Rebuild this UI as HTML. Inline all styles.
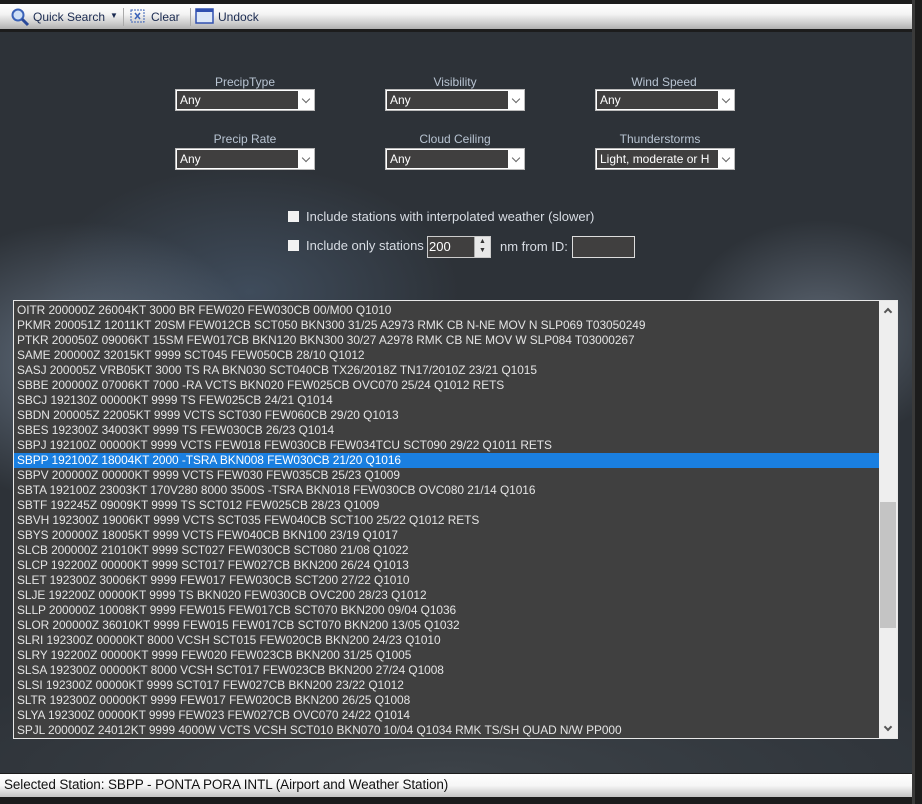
<!DOCTYPE html>
<html><head><meta charset="utf-8"><style>
*{margin:0;padding:0;box-sizing:border-box}
body{width:922px;height:804px;background:#1c1c1c;position:relative;overflow:hidden;font-family:"Liberation Sans",sans-serif}
#tb{position:absolute;left:0;top:4px;width:914px;height:25px;background:linear-gradient(#fff 0%,#f4f4f4 40%,#c9c9c9 80%,#b0b0b0 100%);border-right:1px solid #777}
#tb span{position:absolute;top:6px;font-size:12px;color:#1a2a50}
.sep{position:absolute;top:4px;width:1px;height:18px;background:#aaa}
#main{position:absolute;left:0;top:32px;width:912px;height:741px;overflow:hidden;
background:
radial-gradient(ellipse 260px 200px at 80px 330px,rgba(150,170,195,.5),rgba(0,0,0,0) 70%),
radial-gradient(ellipse 300px 180px at 250px 260px,rgba(90,115,145,.4),rgba(0,0,0,0) 70%),
radial-gradient(ellipse 200px 160px at 820px 300px,rgba(150,165,185,.45),rgba(0,0,0,0) 70%),
radial-gradient(ellipse 600px 120px at 450px 740px,rgba(60,66,72,1),rgba(45,50,56,1) 100%),
#0b1a30}
#rb{position:absolute;left:912px;top:0;width:3px;height:804px;background:#3a3a3a}
.lbl{position:absolute;width:140px;text-align:center;font-size:12px;color:#b8c4d2}
.cb{position:absolute;width:140px;height:22px;background:#fff;border:1px solid #bbb}
.cb .t{position:absolute;left:1px;top:1px;width:121px;height:18px;background:#403f3f;color:#fff;font-size:12px;padding:2px 0 0 3px;white-space:nowrap;overflow:hidden}
.cb .a{position:absolute;right:5px;top:6px;width:6px;height:6px;border-right:1px solid #666;border-bottom:1px solid #666;transform:rotate(45deg)}
.chk{position:absolute;width:11px;height:11px;background:#f2f2f2}
.ct{position:absolute;font-size:13px;color:#d8dde4}
#list{position:absolute;left:13px;top:300px;width:885px;height:439px;background:#404040;border:1px solid #e8e8e8}
#list div.r{height:15px;line-height:15px;font-size:11.9px;color:#e4e4e4;padding-left:3px;white-space:nowrap;width:865px;overflow:hidden;letter-spacing:-0.05px}
#list div.sel{background:#1a7fe0;color:#fff}
#sb{position:absolute;right:0;top:0;width:18px;height:437px;background:#eeeeee}
#thumb{position:absolute;left:1px;top:201px;width:16px;height:126px;background:#c4c4c4}
#status{position:absolute;left:0;top:774px;width:912px;height:23px;background:linear-gradient(#fff 0%,#f6f6f6 50%,#c4c4c4 100%);font-size:13.5px;color:#111;padding:3px 0 0 4px;letter-spacing:-0.1px}
</style></head><body>
<div id="tb">
<svg style="position:absolute;left:10px;top:3px" width="20" height="20"><circle cx="8" cy="8" r="5.5" fill="#cfe0f6" stroke="#3a62b8" stroke-width="2"/><line x1="12" y1="12" x2="18" y2="18" stroke="#2a4a9a" stroke-width="3"/></svg>
<span style="left:33px">Quick Search</span><span style="left:110px;top:7px;font-size:8px">▼</span>
<div class="sep" style="left:123px"></div>
<svg style="position:absolute;left:130px;top:5px" width="16" height="15"><rect x="1" y="1" width="13" height="12" fill="none" stroke="#3a62b8" stroke-dasharray="2,1"/><path d="M5 4l5 6M10 4l-5 6" stroke="#3a62b8" stroke-width="1.5"/></svg>
<span style="left:151px">Clear</span>
<div class="sep" style="left:190px"></div>
<svg style="position:absolute;left:195px;top:4px" width="20" height="16"><rect x="1" y="1" width="17" height="14" fill="#dde8f8" stroke="#3050b0" stroke-width="1.5"/><rect x="1" y="1" width="17" height="3" fill="#3050b0"/></svg>
<span style="left:218px">Undock</span>
</div>
<div id="rb"></div>
<div id="main">
<div class="lbl" style="left:175px;top:43px">PrecipType</div>
<div class="lbl" style="left:385px;top:43px">Visibility</div>
<div class="lbl" style="left:594px;top:43px">Wind Speed</div>
<div class="cb" style="left:175px;top:57px"><div class="t">Any</div><div class="a"></div></div>
<div class="cb" style="left:385px;top:57px"><div class="t">Any</div><div class="a"></div></div>
<div class="cb" style="left:595px;top:57px"><div class="t">Any</div><div class="a"></div></div>
<div class="lbl" style="left:175px;top:100px">Precip Rate</div>
<div class="lbl" style="left:385px;top:100px">Cloud Ceiling</div>
<div class="lbl" style="left:590px;top:100px">Thunderstorms</div>
<div class="cb" style="left:175px;top:116px"><div class="t">Any</div><div class="a"></div></div>
<div class="cb" style="left:385px;top:116px"><div class="t">Any</div><div class="a"></div></div>
<div class="cb" style="left:595px;top:116px"><div class="t">Light, moderate or H</div><div class="a"></div></div>
<div class="chk" style="left:288px;top:179px"></div>
<div class="ct" style="left:306px;top:177px">Include stations with interpolated weather (slower)</div>
<div class="chk" style="left:288px;top:208px"></div>
<div class="ct" style="left:306px;top:206px">Include only stations</div>
<div style="position:absolute;left:427px;top:204px;width:64px;height:22px;background:#403f3f;border:1px solid #ccc;color:#fff;font-size:13px;padding:2px 0 0 1px">200
<div style="position:absolute;right:0;top:0;width:16px;height:20px;background:#e8e8e8;border-left:1px solid #aaa;font-size:7px;color:#333;text-align:center;line-height:9px">▲<br>▼</div></div>
<div class="ct" style="left:500px;top:207px">nm from ID:</div>
<div style="position:absolute;left:572px;top:204px;width:63px;height:22px;background:#403f3f;border:1px solid #ddd"></div>
</div>
<div id="list">
<div style="height:2px"></div>
<div class="r">OITR 200000Z 26004KT 3000 BR FEW020 FEW030CB 00/M00 Q1010</div>
<div class="r">PKMR 200051Z 12011KT 20SM FEW012CB SCT050 BKN300 31/25 A2973 RMK CB N-NE MOV N SLP069 T03050249</div>
<div class="r">PTKR 200050Z 09006KT 15SM FEW017CB BKN120 BKN300 30/27 A2978 RMK CB NE MOV W SLP084 T03000267</div>
<div class="r">SAME 200000Z 32015KT 9999 SCT045 FEW050CB 28/10 Q1012</div>
<div class="r">SASJ 200005Z VRB05KT 3000 TS RA BKN030 SCT040CB TX26/2018Z TN17/2010Z 23/21 Q1015</div>
<div class="r">SBBE 200000Z 07006KT 7000 -RA VCTS BKN020 FEW025CB OVC070 25/24 Q1012 RETS</div>
<div class="r">SBCJ 192130Z 00000KT 9999 TS FEW025CB 24/21 Q1014</div>
<div class="r">SBDN 200005Z 22005KT 9999 VCTS SCT030 FEW060CB 29/20 Q1013</div>
<div class="r">SBES 192300Z 34003KT 9999 TS FEW030CB 26/23 Q1014</div>
<div class="r">SBPJ 192100Z 00000KT 9999 VCTS FEW018 FEW030CB FEW034TCU SCT090 29/22 Q1011 RETS</div>
<div class="r sel">SBPP 192100Z 18004KT 2000 -TSRA BKN008 FEW030CB 21/20 Q1016</div>
<div class="r">SBPV 200000Z 00000KT 9999 VCTS FEW030 FEW035CB 25/23 Q1009</div>
<div class="r">SBTA 192100Z 23003KT 170V280 8000 3500S -TSRA BKN018 FEW030CB OVC080 21/14 Q1016</div>
<div class="r">SBTF 192245Z 09009KT 9999 TS SCT012 FEW025CB 28/23 Q1009</div>
<div class="r">SBVH 192300Z 19006KT 9999 VCTS SCT035 FEW040CB SCT100 25/22 Q1012 RETS</div>
<div class="r">SBYS 200000Z 18005KT 9999 VCTS FEW040CB BKN100 23/19 Q1017</div>
<div class="r">SLCB 200000Z 21010KT 9999 SCT027 FEW030CB SCT080 21/08 Q1022</div>
<div class="r">SLCP 192200Z 00000KT 9999 SCT017 FEW027CB BKN200 26/24 Q1013</div>
<div class="r">SLET 192300Z 30006KT 9999 FEW017 FEW030CB SCT200 27/22 Q1010</div>
<div class="r">SLJE 192200Z 00000KT 9999 TS BKN020 FEW030CB OVC200 28/23 Q1012</div>
<div class="r">SLLP 200000Z 10008KT 9999 FEW015 FEW017CB SCT070 BKN200 09/04 Q1036</div>
<div class="r">SLOR 200000Z 36010KT 9999 FEW015 FEW017CB SCT070 BKN200 13/05 Q1032</div>
<div class="r">SLRI 192300Z 00000KT 8000 VCSH SCT015 FEW020CB BKN200 24/23 Q1010</div>
<div class="r">SLRY 192200Z 00000KT 9999 FEW020 FEW023CB BKN200 31/25 Q1005</div>
<div class="r">SLSA 192300Z 00000KT 8000 VCSH SCT017 FEW023CB BKN200 27/24 Q1008</div>
<div class="r">SLSI 192300Z 00000KT 9999 SCT017 FEW027CB BKN200 23/22 Q1012</div>
<div class="r">SLTR 192300Z 00000KT 9999 FEW017 FEW020CB BKN200 26/25 Q1008</div>
<div class="r">SLYA 192300Z 00000KT 9999 FEW023 FEW027CB OVC070 24/22 Q1014</div>
<div class="r">SPJL 200000Z 24012KT 9999 4000W VCTS VCSH SCT010 BKN070 10/04 Q1034 RMK TS/SH QUAD N/W PP000</div>
<div id="sb"><div style="position:absolute;left:6px;top:8px;width:6px;height:6px;border-left:2px solid #555;border-top:2px solid #555;transform:rotate(45deg)"></div>
<div id="thumb"></div>
<div style="position:absolute;left:6px;top:423px;width:6px;height:6px;border-right:2px solid #555;border-bottom:2px solid #555;transform:rotate(45deg)"></div></div>
</div>
<div id="status">Selected Station: SBPP - PONTA PORA INTL (Airport and Weather Station)</div>
</body></html>
